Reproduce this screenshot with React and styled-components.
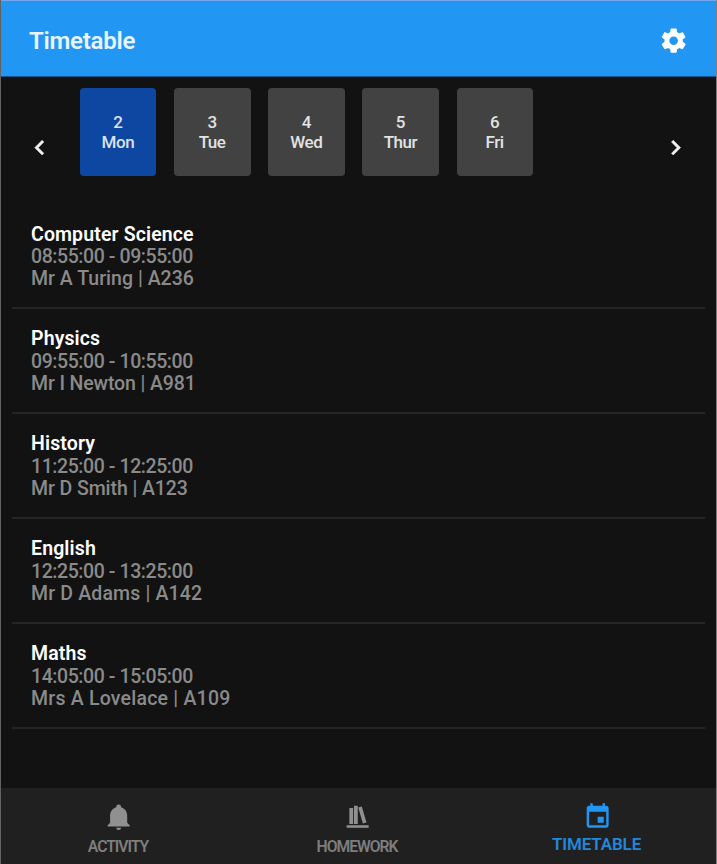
import React from 'react';
import styled, { createGlobalStyle } from 'styled-components';

const GlobalStyle = createGlobalStyle`
  *, *::before, *::after { box-sizing: border-box; }
  body { margin: 0; background: #121212; }
`;

const Screen = styled.div`
  width: 717px;
  height: 864px;
  display: flex;
  flex-direction: column;
  overflow: hidden;
  background: #121212;
  border: 1px solid #626262;
  border-right-color: #7d7d7d;
  border-top: none;
  border-bottom: none;
  font-family: Roboto, "Liberation Sans", sans-serif;
  font-weight: 500;
`;

const AppBar = styled.header`
  height: 77px;
  flex: none;
  display: flex;
  align-items: center;
  justify-content: space-between;
  margin: 0 -1px;
  padding: 4px 28px 0 28px;
  background: #2196f3;
  border: 1px solid #74a7ee;
  border-bottom: 1px solid #125390;
`;

const Title = styled.h1`
  margin: 0;
  font-size: 24px;
  line-height: 28px;
  font-weight: 600;
  letter-spacing: -0.25px;
  color: #e9f4fe;
`;

const IconButton = styled.button`
  display: flex;
  padding: 0;
  border: none;
  background: none;
  color: #fff;
`;

const DayPicker = styled.nav`
  height: 111px;
  flex: none;
  display: flex;
  align-items: flex-start;
  padding: 11px 25.5px 0 24px;

  > button { margin-top: 45px; color: #f0f0f0; }
  path { stroke: currentColor; stroke-width: 0.5px; }
`;

const Days = styled.div`
  flex: 1;
  display: flex;
  gap: 17.5px;
  padding-left: 25.5px;
`;

const Day = styled.div`
  width: 76.7px;
  height: 88px;
  display: flex;
  flex-direction: column;
  align-items: center;
  padding: 24px 0.5px 0 0;
  border-radius: 4px;
  background: ${({ $active }) => ($active ? '#0d47a1' : '#424242')};
  color: ${({ $active }) => ($active ? '#dbe3f1' : '#e3e3e3')};
  font-size: 17px;
  line-height: 20px;
  font-weight: 500;
  letter-spacing: -0.45px;
`;

const LessonList = styled.main`
  flex: 1;
  padding: 16px 11px 0;
`;

const Lesson = styled.article`
  height: 105px;
  padding: 19px 19px 0;
  border-bottom: 2px solid #252525;

  &:first-child h2 {
    padding-top: 1px;
    margin-bottom: -1px;
  }
`;

const Subject = styled.h2`
  margin: 0;
  font-size: 19.5px;
  line-height: 22px;
  font-weight: 600;
  letter-spacing: 0.13px;
  color: #fff;
`;

const Detail = styled.p`
  margin: 0;
  padding-top: ${({ $time }) => ($time ? '1px' : '0')};
  font-size: 19.5px;
  line-height: 22px;
  letter-spacing: ${({ $tracking }) => $tracking}px;
  color: #8a8a8a;
`;

const BottomNav = styled.footer`
  height: 76px;
  flex: none;
  display: grid;
  grid-template-columns: 236px 242px 1fr;
  background: #202020;
`;

const Tab = styled.div`
  display: flex;
  flex-direction: column;
  align-items: center;
  padding: 14px 0 0;
  color: ${({ $active }) => ($active ? '#2196f3' : '#909090')};
`;

const TabLabel = styled.span`
  margin-top: ${({ $active }) => ($active ? '2.7px' : '5.7px')};
  padding-right: 2px;
  font-size: ${({ $active }) => ($active ? '17px' : '15.7px')};
  line-height: 20px;
  font-weight: 600;
  letter-spacing: ${({ $active }) => ($active ? '-0.15px' : '-1.02px')};
  color: ${({ $active }) => ($active ? '#2288da' : '#7e7e7e')};
`;

const Glyph = ({ d, size = 29.3 }) => (
  <svg width={size} height={size} viewBox="0 0 24 24" fill="currentColor">
    <path d={d} />
  </svg>
);

const paths = {
  gear: 'M19.43 12.98c.04-.32.07-.64.07-.98s-.03-.66-.07-.98l2.11-1.65c.19-.15.24-.42.12-.64l-2-3.46c-.12-.22-.39-.3-.61-.22l-2.49 1c-.52-.4-1.08-.73-1.69-.98l-.38-2.65C14.46 2.18 14.25 2 14 2h-4c-.25 0-.46.18-.49.42l-.38 2.65c-.61.25-1.17.59-1.69.98l-2.49-1c-.23-.09-.49 0-.61.22l-2 3.46c-.13.22-.07.49.12.64l2.11 1.65c-.04.32-.07.65-.07.98s.03.66.07.98l-2.11 1.65c-.19.15-.24.42-.12.64l2 3.46c.12.22.39.3.61.22l2.49-1c.52.4 1.08.73 1.69.98l.38 2.65c.03.24.24.42.49.42h4c.25 0 .46-.18.49-.42l.38-2.65c.61-.25 1.17-.59 1.69-.98l2.49 1c.23.09.49 0 .61-.22l2-3.46c.12-.22.07-.49-.12-.64l-2.11-1.65zM12 15.5c-1.93 0-3.5-1.57-3.5-3.5s1.57-3.5 3.5-3.5 3.5 1.57 3.5 3.5-1.57 3.5-3.5 3.5z',
  left: 'M15.41 7.41 14 6l-6 6 6 6 1.41-1.41L10.83 12z',
  right: 'M8.59 16.59 13.17 12 8.59 7.41 10 6l6 6-6 6z',
  bell: 'M21 19v1H3v-1l2-2v-6c0-3.1 2.03-5.83 5-6.71V4a2 2 0 0 1 4 0v.29c2.97.88 5 3.61 5 6.71v6l2 2M14 21a2 2 0 0 1-4 0',
  books: 'M5.2 5h3.1v13H5.2zM9 3h3.1v15H9zM12.5 4.5l2.9-.8 3.8 13.1-2.9.8zM3 19h18v2H3z',
  calendar: 'M17 12h-5v5h5v-5zM16 1v2H8V1H6v2H5c-1.11 0-1.99.9-1.99 2L3 19c0 1.1.89 2 2 2h14c1.1 0 2-.9 2-2V5c0-1.1-.9-2-2-2h-1V1h-2zm3 18H5V8h14v11z',
};

const days = [[2, 'Mon'], [3, 'Tue'], [4, 'Wed'], [5, 'Thur'], [6, 'Fri']];

const lessons = [
  ['Computer Science', '08:55:00 - 09:55:00', 'Mr A Turing | A236', 0.02],
  ['Physics', '09:55:00 - 10:55:00', 'Mr I Newton | A981', -0.12],
  ['History', '11:25:00 - 12:25:00', 'Mr D Smith | A123', -0.08],
  ['English', '12:25:00 - 13:25:00', 'Mr D Adams | A142', 0.16],
  ['Maths', '14:05:00 - 15:05:00', 'Mrs A Lovelace | A109', 0.22],
];

const tabs = [['bell', 'ACTIVITY'], ['books', 'HOMEWORK'], ['calendar', 'TIMETABLE']];

export default function App() {
  return (
    <Screen>
      <GlobalStyle />
      <AppBar>
        <Title>Timetable</Title>
        <IconButton aria-label="Settings"><Glyph d={paths.gear} /></IconButton>
      </AppBar>
      <DayPicker>
        <IconButton aria-label="Previous week"><Glyph d={paths.left} /></IconButton>
        <Days>
          {days.map(([date, name], i) => (
            <Day key={name} $active={i === 0}>
              <span>{date}</span>
              <span>{name}</span>
            </Day>
          ))}
        </Days>
        <IconButton aria-label="Next week"><Glyph d={paths.right} /></IconButton>
      </DayPicker>
      <LessonList>
        {lessons.map(([subject, time, place, tracking]) => (
          <Lesson key={subject}>
            <Subject>{subject}</Subject>
            <Detail $time $tracking={-0.42}>{time}</Detail>
            <Detail $tracking={tracking}>{place}</Detail>
          </Lesson>
        ))}
      </LessonList>
      <BottomNav>
        {tabs.map(([icon, label], i) => (
          <Tab key={label} $active={i === 2}>
            <Glyph d={paths[icon]} />
            <TabLabel $active={i === 2}>{label}</TabLabel>
          </Tab>
        ))}
      </BottomNav>
    </Screen>
  );
}
